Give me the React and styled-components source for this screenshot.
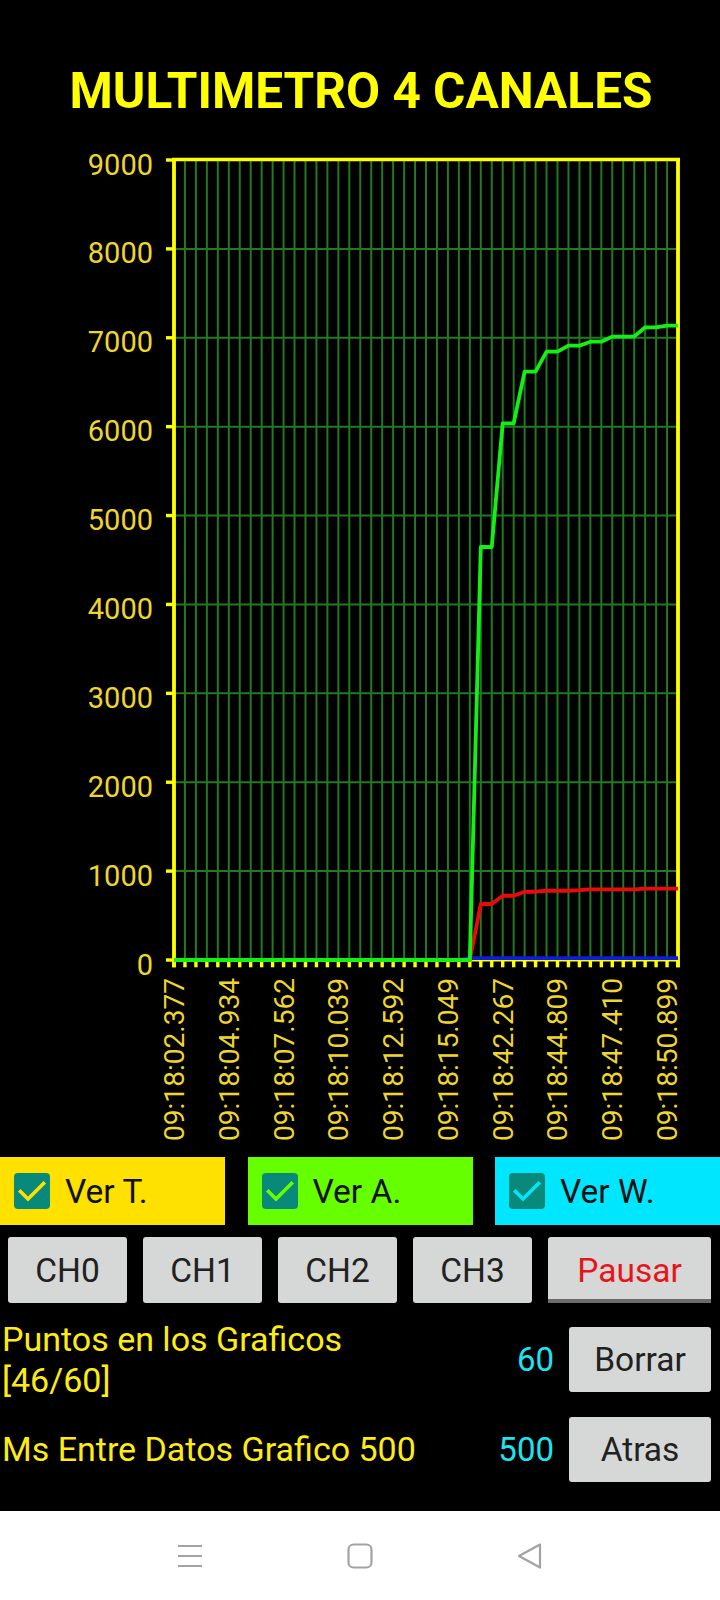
import React from "react";
import styled, { createGlobalStyle } from "styled-components";

const Global = createGlobalStyle`
  html, body { margin: 0; padding: 0; background: #000; }
  body { font-family: Roboto, "Liberation Sans", sans-serif; }
  * { box-sizing: border-box; }
`;

const Screen = styled.div`
  width: 720px;
  height: 1600px;
  background: #000;
  display: flex;
  flex-direction: column;
  overflow: hidden;
`;

const Title = styled.h1`
  margin: 0;
  padding-top: 66px;
  font-family: Roboto, "Liberation Sans", sans-serif;
  font-weight: 700;
  font-size: 49.5px;
  line-height: 50px;
  color: #ffff00;
  text-align: center;
  padding-left: 2px;
`;

const ChartSvg = styled.svg`
  display: block;
  margin-top: 24px;
  width: 720px;
  height: 1017px;
  flex: none;
`;

const CheckRow = styled.div`
  display: grid;
  grid-template-columns: repeat(3, 1fr);
  column-gap: 22.5px;
  height: 68px;
  flex: none;
`;

const CheckCell = styled.label`
  display: flex;
  align-items: center;
  gap: 15px;
  padding-left: 14px;
  background: ${(p) => p.$bg};
  font-size: 33.5px;
  color: #111;
`;

const Box = styled.span`
  width: 36px;
  height: 36px;
  border-radius: 4px;
  background: #09897a;
  display: flex;
  align-items: center;
  justify-content: center;
  flex: none;
`;

const ButtonRow = styled.div`
  display: flex;
  gap: 16px;
  padding: 0 9px 0 8px;
  margin-top: 12px;
  height: 66px;
  flex: none;
`;

const Btn = styled.button`
  border: none;
  border-radius: 3px;
  background: #d6d7d7;
  font-family: Roboto, "Liberation Sans", sans-serif;
  font-size: 33.5px;
  color: ${(p) => p.$color || "#212121"};
  width: ${(p) => p.$w}px;
  height: ${(p) => p.$h || 66}px;
  padding: 0;
  flex: none;
  display: flex;
  align-items: center;
  justify-content: center;
`;

const ToggleBtn = styled(Btn)`
  border-radius: 3px 3px 0 0;
  border-bottom: 4px solid #6b6b6b;
  padding-top: 4px;
`;

const Settings = styled.div`
  display: flex;
  flex-direction: column;
  gap: 16.5px;
  margin-top: 15.5px;
  flex: none;
`;

const SettingRow = styled.div`
  display: flex;
  align-items: center;
  padding: 0 9px 0 2px;
  min-height: 65px;
`;

const SettingLabel = styled.div`
  flex: 1;
  font-size: 34px;
  line-height: 41px;
  color: #ffec12;
`;

const SettingValue = styled.div`
  font-size: 33px;
  color: #1ee4f0;
  margin-right: 15px;
`;

const Filler = styled.div`
  flex: 1;
  background: #000;
`;

const NavBar = styled.div`
  height: 89px;
  flex: none;
  background: #fff;
  display: flex;
  justify-content: center;
  align-items: center;
`;

const NavSlot = styled.div`
  width: 170px;
  display: flex;
  justify-content: center;
  align-items: center;
`;

const X0 = 174;
const DX = 10.957;
const Y0 = 960;
const YS = 800 / 9000;

const green = [
  ...Array(28).fill(0),
  4646, 4646, 6038, 6038, 6619, 6619, 6844, 6844, 6911, 6911,
  6956, 6956, 7013, 7013, 7013, 7118, 7118, 7136, 7136,
];
const red = [
  ...Array(28).fill(0),
  630, 630, 723, 723, 768, 768, 779, 779, 779, 785,
  795, 795, 795, 795, 795, 802, 802, 802, 802,
];
const blue = [...Array(27).fill(0), ...Array(20).fill(20)];

const pts = (arr) =>
  arr.map((v, i) => `${(X0 + i * DX).toFixed(2)},${(Y0 - v * YS).toFixed(2)}`).join(" ");

const timeLabels = [
  "09:18:02.377",
  "09:18:04.934",
  "09:18:07.562",
  "09:18:10.039",
  "09:18:12.592",
  "09:18:15.049",
  "09:18:42.267",
  "09:18:44.809",
  "09:18:47.410",
  "09:18:50.899",
];

const AXIS = "#ffff00";
const GRID = "#237823";
const LABEL = "#efd62b";

function Chart() {
  const ys = Array.from({ length: 10 }, (_, k) => Y0 - k * (800 / 9));
  const xs = Array.from({ length: 47 }, (_, i) => X0 + i * DX);
  return (
    <ChartSvg viewBox="0 140 720 1017">
      {xs.slice(1, 46).map((x, i) => (
        <line key={"v" + i} x1={x} x2={x} y1={160} y2={960} stroke={GRID} strokeWidth="2" />
      ))}
      {ys.slice(1, 9).map((y, i) => (
        <line key={"h" + i} x1={174} x2={678} y1={y} y2={y} stroke={GRID} strokeWidth="2" />
      ))}
      {ys.map((y, k) => (
        <g key={"yl" + k}>
          <line x1={166} x2={174} y1={y} y2={y} stroke={AXIS} strokeWidth="3.4" />
          <text
            x={153}
            y={y + 14.5}
            textAnchor="end"
            fontFamily="Roboto, sans-serif"
            fontSize="29"
            fill={LABEL}
          >
            {k * 1000}
          </text>
        </g>
      ))}
      {xs.map((x, i) => (
        <rect key={"t" + i} x={x - 1.7} y={961} width={3.4} height={6.3} fill={AXIS} />
      ))}
      <line x1={172} x2={680} y1={159.5} y2={159.5} stroke={AXIS} strokeWidth="3.6" />
      <line x1={174} x2={174} y1={158} y2={967.3} stroke={AXIS} strokeWidth="3.8" />
      <line x1={678} x2={678} y1={158} y2={967.3} stroke={AXIS} strokeWidth="3.8" />
      <line x1={174} x2={678} y1={960.5} y2={960.5} stroke={AXIS} strokeWidth="2" />
      <polyline points={pts(blue)} fill="none" stroke="#0a1edc" strokeWidth="3.8" strokeLinejoin="round" />
      <polyline points={pts(red)} fill="none" stroke="#ea0a0a" strokeWidth="3.8" strokeLinejoin="round" />
      <polyline points={pts(green)} fill="none" stroke="#14f014" strokeWidth="3.8" strokeLinejoin="round" />
      {timeLabels.map((t, j) => {
        const x = X0 + j * 5 * DX;
        return (
          <text
            key={t}
            transform={`translate(${x + 10} 978) rotate(-90)`}
            textAnchor="end"
            fontFamily="Roboto, sans-serif"
            fontSize="28"
            fill={LABEL}
            textLength="163"
            lengthAdjust="spacingAndGlyphs"
          >
            {t}
          </text>
        );
      })}
    </ChartSvg>
  );
}

function Check({ color }) {
  return (
    <Box>
      <svg width="36" height="36" viewBox="0 0 36 36">
        <polyline
          points="6.5,18.5 14,26 29.5,10.5"
          fill="none"
          stroke={color}
          strokeWidth="3.6"
          strokeLinecap="square"
        />
      </svg>
    </Box>
  );
}

const NAV = "#a3a3a3";

export default function App() {
  return (
    <Screen>
      <Global />
      <Title>MULTIMETRO 4 CANALES</Title>
      <Chart />
      <CheckRow>
        <CheckCell $bg="#ffe100">
          <Check color="#ffe100" />
          Ver T.
        </CheckCell>
        <CheckCell $bg="#66ff00">
          <Check color="#66ff00" />
          Ver A.
        </CheckCell>
        <CheckCell $bg="#00e6ff">
          <Check color="#00e6ff" />
          Ver W.
        </CheckCell>
      </CheckRow>
      <ButtonRow>
        <Btn $w={119}>CH0</Btn>
        <Btn $w={119}>CH1</Btn>
        <Btn $w={119}>CH2</Btn>
        <Btn $w={119}>CH3</Btn>
        <ToggleBtn $w={163} $color="#e8141a">Pausar</ToggleBtn>
      </ButtonRow>
      <Settings>
        <SettingRow>
          <SettingLabel>
            Puntos en los Graficos
            <br />
            [46/60]
          </SettingLabel>
          <SettingValue>60</SettingValue>
          <Btn $w={142} $h={65}>Borrar</Btn>
        </SettingRow>
        <SettingRow>
          <SettingLabel>Ms Entre Datos Grafico 500</SettingLabel>
          <SettingValue>500</SettingValue>
          <Btn $w={142} $h={65}>Atras</Btn>
        </SettingRow>
      </Settings>
      <Filler />
      <NavBar>
        <NavSlot>
          <svg width="28" height="26" viewBox="0 0 28 26">
            <path d="M2 3h24M2 13h24M2 23h24" stroke={NAV} strokeWidth="2" />
          </svg>
        </NavSlot>
        <NavSlot>
          <svg width="28" height="28" viewBox="0 0 28 28">
            <rect x="2.5" y="2.5" width="23" height="23" rx="5" fill="none" stroke={NAV} strokeWidth="2.2" />
          </svg>
        </NavSlot>
        <NavSlot>
          <svg width="30" height="30" viewBox="0 0 30 30">
            <path
              d="M25 3.5 L4 15 L25 26.5 Z"
              fill="none"
              stroke={NAV}
              strokeWidth="2.2"
              strokeLinejoin="round"
            />
          </svg>
        </NavSlot>
      </NavBar>
    </Screen>
  );
}
